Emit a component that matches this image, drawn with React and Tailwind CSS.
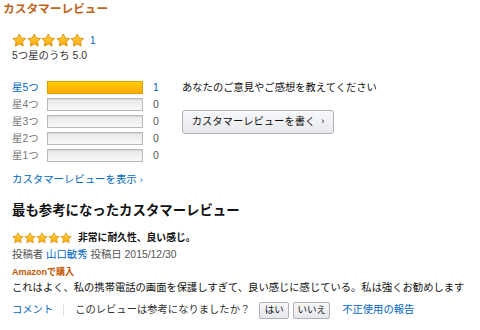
import React from 'react';

const FONT = "font-['Liberation_Sans','Noto_Sans_CJK_JP',sans-serif]";

const Star = ({ size }) => (
    <svg width={size} height={size} viewBox="0 0 24 24" className="block">
        <path
            d="M12 1.6l3.2 6.6 7.2 1-5.2 5.1 1.3 7.2L12 18.1l-6.5 3.4 1.3-7.2L1.6 9.2l7.2-1z"
            fill="url(#starFill)"
            stroke="#d58800"
            strokeWidth="1.4"
            strokeLinejoin="round"
        />
    </svg>
);

const Stars = ({ size }) => (
    <div className="flex items-center">
        {[0, 1, 2, 3, 4].map((i) => <Star key={i} size={size} />)}
    </div>
);

const rows = [
    { label: '星5つ', count: 1, pct: 100 },
    { label: '星4つ', count: 0, pct: 0 },
    { label: '星3つ', count: 0, pct: 0 },
    { label: '星2つ', count: 0, pct: 0 },
    { label: '星1つ', count: 0, pct: 0 },
];

const SmallButton = ({ children, className = '' }) => (
    <button className={`h-[17px] border border-[#adb1b8] rounded-[2px] bg-linear-to-b from-[#f7f8fa] to-[#e5e7ea] text-[9.5px] leading-none text-[#111] flex items-center justify-center ${className}`}>
        {children}
    </button>
);

export default function App() {
    return (
        <div className={`w-[480px] h-[330px] bg-white overflow-hidden text-[#333] ${FONT}`}>
            <svg width="0" height="0" className="absolute">
                <defs>
                    <linearGradient id="starFill" x1="0" y1="0" x2="0" y2="1">
                        <stop offset="0" stopColor="#ffd84a" />
                        <stop offset="1" stopColor="#ffa400" />
                    </linearGradient>
                </defs>
            </svg>

            <div className="pl-[3px] pt-px text-[11.7px] leading-[16px] font-bold text-[#c0651c]">カスタマーレビュー</div>

            <div className="pl-3">
                {/* 平均評価 */}
                <div className="mt-[15px] h-4 flex items-center">
                    <Stars size={14.6} />
                    <span className="ml-[5px] text-[10px] text-[#0066c0]">1</span>
                </div>
                <div className="mt-px text-[10.4px] leading-[14px] text-[#333]">5つ星のうち 5.0</div>

                {/* 分布 + 投稿ボタン */}
                <div className="mt-4 flex">
                    <div className="w-[170px]">
                        {rows.map((r, i) => (
                            <div key={r.label} className="h-[17px] flex items-center">
                                <span className={`w-[35px] text-[10.4px] ${i === 0 ? 'text-[#0066c0]' : 'text-[#777]'}`}>{r.label}</span>
                                <div className="w-[96px] h-[13px] border border-[#b9b9b9] bg-linear-to-b from-[#e9e9e9] to-[#f8f8f8] shadow-[inset_0_1px_1px_rgba(0,0,0,0.08)]">
                                    {r.pct > 0 && (
                                        <div
                                            className="h-full bg-linear-to-b from-[#ffce00] to-[#ffa700] border border-[#d9a000] -m-px box-content"
                                            style={{ width: `${r.pct}%` }}
                                        />
                                    )}
                                </div>
                                <span className={`ml-[10px] text-[10.4px] ${i === 0 ? 'text-[#0066c0]' : 'text-[#555]'}`}>{r.count}</span>
                            </div>
                        ))}
                    </div>
                    <div className="pt-[2px]">
                        <div className="text-[10.3px] leading-[14px] text-[#111]">あなたのご意見やご感想を教えてください</div>
                        <button className="mt-[15px] w-[152px] h-6 border border-[#adb1b8] rounded-[3px] bg-linear-to-b from-[#f7f8fa] to-[#e7e9ec] shadow-[0_1px_0_rgba(255,255,255,0.6)_inset] text-[10.3px] text-[#111] flex items-center justify-center">
                            カスタマーレビューを書く<span className="ml-[6px] text-[9px]">›</span>
                        </button>
                    </div>
                </div>

                <div className="mt-[9px] text-[10.4px] leading-[14px] text-[#0066c0]">
                    カスタマーレビューを表示<span className="ml-[3px] text-[9px]">›</span>
                </div>

                {/* 最も参考になったレビュー */}
                <div className="mt-[15px] text-[13.4px] leading-[18px] font-bold text-[#111]">最も参考になったカスタマーレビュー</div>

                <div className="mt-[11px] h-[14px] flex items-center">
                    <Stars size={12} />
                    <span className="ml-[6px] text-[9.8px] font-bold text-[#111]">非常に耐久性、良い感じ。</span>
                </div>
                <div className="mt-[3px] text-[10.4px] leading-[14px] text-[#555]">
                    投稿者 <span className="text-[#0066c0]">山口敏秀</span> 投稿日 2015/12/30
                </div>
                <div className="mt-1 text-[9px] leading-[12px] font-bold text-[#c45500]">Amazonで購入</div>
                <div className="mt-[3px] text-[10.3px] leading-[14px] text-[#111] whitespace-nowrap">
                    これはよく、私の携帯電話の画面を保護しすぎて、良い感じに感じている。私は強くお勧めします
                </div>

                <div className="mt-[5px] h-5 flex items-center text-[10.3px]">
                    <span className="text-[#0066c0]">コメント</span>
                    <span className="ml-[10px] w-px h-[12px] bg-[#ddd]" />
                    <span className="ml-[11px] text-[#333]">このレビューは参考になりましたか？</span>
                    <SmallButton className="ml-[9px] w-[30px]">はい</SmallButton>
                    <SmallButton className="ml-1 w-[37px]">いいえ</SmallButton>
                    <span className="ml-3 text-[#0066c0]">不正使用の報告</span>
                </div>
            </div>
        </div>
    );
}
